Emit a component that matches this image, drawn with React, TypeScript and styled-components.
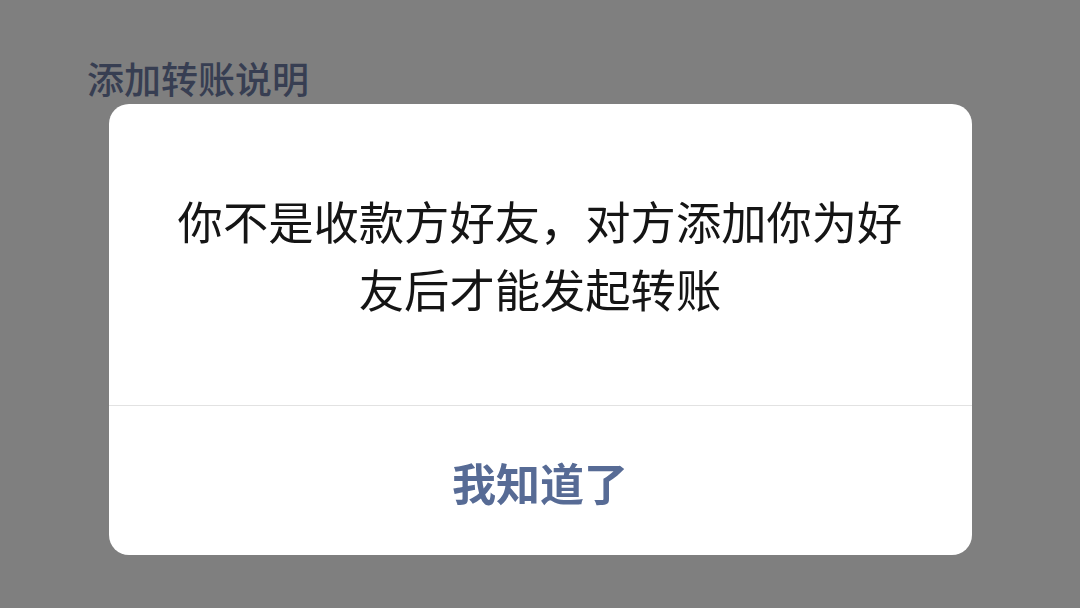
import React from "react";
import styled, { createGlobalStyle } from "styled-components";

const GlobalStyle = createGlobalStyle`
  html, body {
    margin: 0;
    padding: 0;
    height: 100%;
  }
  body {
    font-family: "Noto Sans CJK SC", "Noto Sans", sans-serif;
    background: #7f7f7f;
  }
`;

const Page = styled.main`
  min-height: 608px;
  background: #7f7f7f;
  padding: 53px 0 0 87px;
  box-sizing: border-box;
`;

const PageTitle = styled.h2`
  margin: 0;
  font-size: 37px;
  line-height: 50px;
  font-weight: 500;
  color: #373e52;
`;

const Mask = styled.div`
  position: fixed;
  inset: 0;
  display: flex;
  justify-content: center;
  align-items: flex-start;
  padding-top: 104px;
`;

const Dialog = styled.section`
  width: 863px;
  background: #ffffff;
  border-radius: 20px;
  overflow: hidden;
`;

const Body = styled.div`
  height: 302px;
  box-sizing: border-box;
  padding: 0 58px;
  display: flex;
  align-items: center;
  justify-content: center;
  border-bottom: 1px solid #e2e2e2;
`;

const Message = styled.p`
  margin: 0 0 2px;
  font-size: 45.3px;
  line-height: 68px;
  color: #151515;
  text-align: center;
`;

const Action = styled.button`
  display: flex;
  width: 100%;
  height: 149px;
  align-items: center;
  justify-content: center;
  border: 0;
  background: transparent;
  font-family: inherit;
  font-size: 44px;
  font-weight: 700;
  color: #576b95;
  padding: 2px 0 0;
  cursor: pointer;
`;

const App = () => {
  return (
    <>
      <GlobalStyle />
      <Page>
        <PageTitle>添加转账说明</PageTitle>
      </Page>
      <Mask>
        <Dialog>
          <Body>
            <Message>你不是收款方好友，对方添加你为好友后才能发起转账</Message>
          </Body>
          <Action>我知道了</Action>
        </Dialog>
      </Mask>
    </>
  );
};

export default App;
